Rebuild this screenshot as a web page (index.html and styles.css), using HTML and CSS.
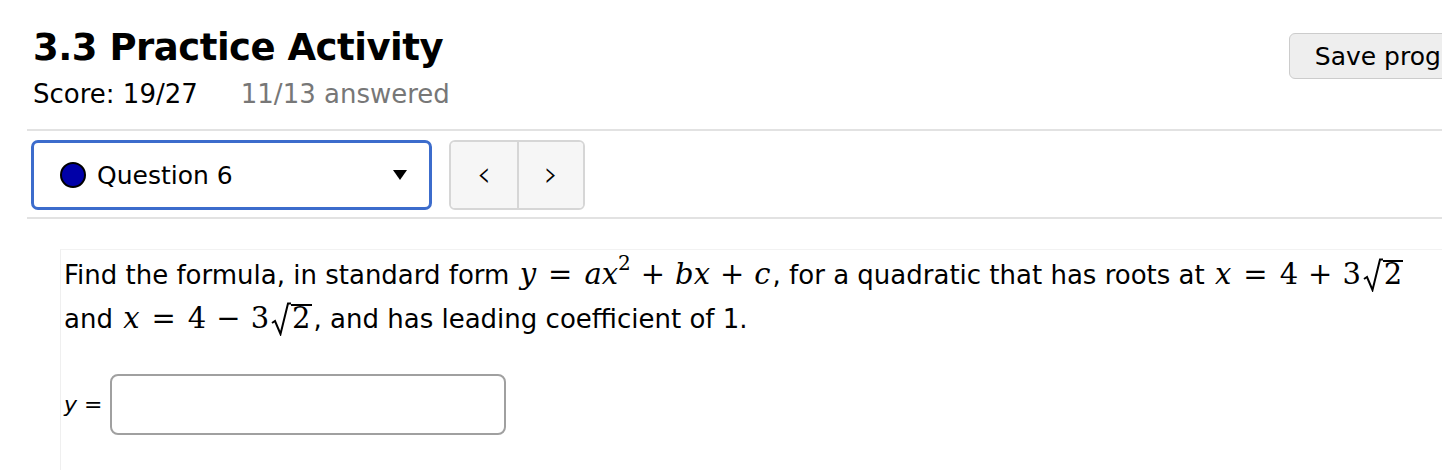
FILE: index.html
```html
<!DOCTYPE html>
<html lang="en">
<head>
    <meta charset="UTF-8">
    <title>3.3 Practice Activity</title>
    <link rel="stylesheet" href="styles.css">
</head>
<body>
    <div class="page">
        <div class="head-row">
            <div class="head-left">
                <h1 class="title">3.3 Practice Activity</h1>
                <div class="score">
                    <span>Score: 19/27</span>
                    <span class="answered">11/13 answered</span>
                </div>
            </div>
            <button class="save-btn">Save progress</button>
        </div>

        <div class="nav-row">
            <div class="q-select">
                <span class="dot"></span>
                <span class="q-label">Question 6</span>
                <span class="caret"></span>
            </div>
            <div class="q-arrows">
                <button class="arrow">&lsaquo;</button>
                <button class="arrow">&rsaquo;</button>
            </div>
        </div>

        <div class="question">
            <p class="q-text">
                Find the formula, in standard form
                <span class="m"><i>y</i><span class="rel">=</span><i>ax</i><sup>2</sup><span class="bin">+</span><i>bx</i><span class="bin">+</span><i>c</i></span>,
                for a quadratic that has roots at
                <span class="m"><i>x</i><span class="rel">=</span>4<span class="bin">+</span>3<span class="sqrt"><svg class="rad" width="20" height="34" viewBox="0 0 20 34"><path d="M1 21 L4 19 L9.5 32 L17 1.5 L20 1.5" fill="none" stroke="#000" stroke-width="2"/></svg><span class="radicand">2</span></span></span>
                and
                <span class="m"><i>x</i><span class="rel">=</span>4<span class="bin">&minus;</span>3<span class="sqrt"><svg class="rad" width="20" height="34" viewBox="0 0 20 34"><path d="M1 21 L4 19 L9.5 32 L17 1.5 L20 1.5" fill="none" stroke="#000" stroke-width="2"/></svg><span class="radicand">2</span></span></span>,
                and has leading coefficient of 1.
            </p>
            <div class="answer-row">
                <span class="y-label">y&nbsp;=</span>
                <input class="answer" type="text">
            </div>
            <div class="help-row">Question Help: <span class="help-icon"></span> <span class="link">Message instructor</span></div>
        </div>
    </div>
</body>
</html>
```

FILE: styles.css
```css
/* Grundlayout */
html, body {
    margin: 0;
    padding: 0;
    background-color: #ffffff;
    font-family: "DejaVu Sans", Verdana, sans-serif;
    color: #000;
    overflow: hidden;
}

.page {
    padding: 0 0 0 27px;
}

/* Kopfzeile */
.head-row {
    display: flex;
    justify-content: space-between;
    align-items: flex-start;
    padding: 24px 0 0 6px;
}
.title {
    margin: 0;
    font-size: 37px;
    font-weight: bold;
    letter-spacing: -0.5px;
    line-height: 48px;
}
.score {
    display: flex;
    gap: 43px;
    font-size: 26px;
    line-height: 44px;
}
.answered {
    color: #777;
}
.save-btn {
    margin-top: 9px;
    margin-right: -76px;
    height: 46px;
    padding: 0 25px;
    background-color: #eeeeee;
    border: 1px solid #cccccc;
    border-radius: 6px;
    font-family: inherit;
    font-size: 25px;
    color: #000;
    white-space: nowrap;
}

/* Fragen-Navigation */
.nav-row {
    display: flex;
    align-items: center;
    gap: 17px;
    margin-top: 13px;
    padding: 9px 0 7px 4px;
    border-top: 2px solid #e2e2e2;
    border-bottom: 2px solid #e2e2e2;
}
.q-select {
    display: flex;
    align-items: center;
    width: 401px;
    height: 70px;
    box-sizing: border-box;
    padding: 0 22px 0 26px;
    border: 3px solid #3c6ccc;
    border-radius: 7px;
    font-size: 25px;
}
.dot {
    width: 22px;
    height: 22px;
    border-radius: 50%;
    background-color: #0000a8;
    border: 2px solid #000;
    margin-right: 11px;
}
.q-label {
    flex: 1;
}
.caret {
    width: 0;
    height: 0;
    border-left: 7px solid transparent;
    border-right: 7px solid transparent;
    border-top: 10px solid #000;
}
.q-arrows {
    display: flex;
    height: 70px;
    border: 2px solid #d6d6d6;
    border-radius: 6px;
    overflow: hidden;
    box-sizing: border-box;
}
.arrow {
    width: 66px;
    border: none;
    background-color: #f6f6f6;
    font-family: "DejaVu Sans Light", "DejaVu Sans", sans-serif;
    font-size: 36px;
    color: #000;
    padding: 0 0 4px;
}
.arrow + .arrow {
    border-left: 2px solid #d6d6d6;
}

/* Aufgabe */
.question {
    margin: 30px 0 0 33px;
    padding: 0 0 0 3px;
    border-left: 1px solid #efefef;
    border-top: 1px solid #f2f2f2;
}
.q-text {
    margin: 0;
    padding-top: 3px;
    font-size: 26px;
    line-height: 43px;
    width: 1372px;
}
.m {
    font-family: "DejaVu Serif", "Liberation Serif", serif;
    font-size: 29px;
    white-space: nowrap;
    margin: 0 2px;
}
.m i {
    font-style: italic;
}
.rel {
    margin: 0 12px;
}
.bin {
    margin: 0 10px;
}
.m sup {
    font-size: 20px;
    vertical-align: 14px;
    line-height: 0;
}
.sqrt {
    display: inline-block;
    margin-left: 2px;
}
.rad {
    vertical-align: -8px;
}
.radicand {
    display: inline-block;
    line-height: 24px;
    border-top: 2px solid #000;
    padding: 0 1px;
}

.answer-row {
    display: flex;
    align-items: center;
    gap: 8px;
    margin-top: 33px;
}
.y-label {
    font-size: 22px;
    font-style: italic;
}
.answer {
    width: 396px;
    height: 61px;
    box-sizing: border-box;
    border: 2px solid #a0a0a0;
    border-radius: 8px;
}

.help-row {
    margin-top: 34px;
    font-size: 25px;
    color: #000;
}
.help-icon {
    display: inline-block;
    width: 26px;
    height: 20px;
    border: 2px solid #555;
    border-radius: 4px;
    vertical-align: middle;
}
.link {
    color: #2020a0;
}
```
